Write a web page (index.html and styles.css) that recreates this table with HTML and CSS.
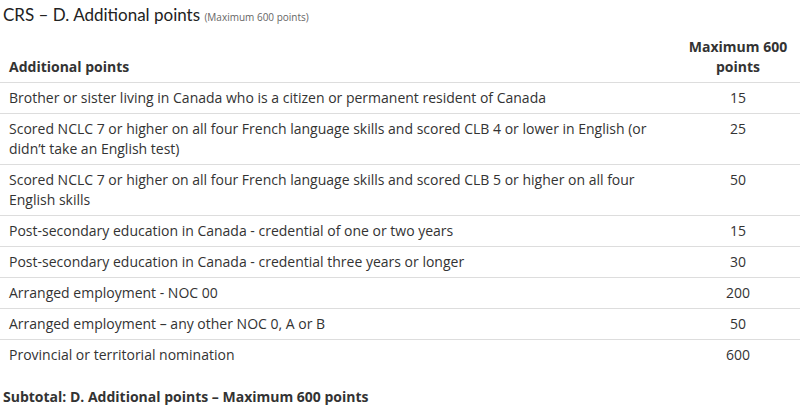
FILE: index.html
```html
<!DOCTYPE html>
<html>
<head>
<meta charset="utf-8">
<link rel="stylesheet" href="styles.css">
</head>
<body>
<h2 class="title">CRS – D. Additional points <small class="note">(Maximum 600 points)</small></h2>
<table class="pts">
  <thead>
    <tr><th class="lbl">Additional points</th><th class="num">Maximum 600 points</th></tr>
  </thead>
  <tbody>
    <tr><td>Brother or sister living in Canada who is a citizen or permanent resident of Canada</td><td class="num">15</td></tr>
    <tr><td>Scored NCLC 7 or higher on all four French language skills and scored CLB 4 or lower in English (or didn’t take an English test)</td><td class="num">25</td></tr>
    <tr><td>Scored NCLC 7 or higher on all four French language skills and scored CLB 5 or higher on all four English skills</td><td class="num">50</td></tr>
    <tr><td>Post-secondary education in Canada - credential of one or two years</td><td class="num">15</td></tr>
    <tr><td>Post-secondary education in Canada - credential three years or longer</td><td class="num">30</td></tr>
    <tr><td>Arranged employment - NOC 00</td><td class="num">200</td></tr>
    <tr><td>Arranged employment – any other NOC 0, A or B</td><td class="num">50</td></tr>
    <tr><td>Provincial or territorial nomination</td><td class="num">600</td></tr>
  </tbody>
</table>
<p class="subtotal">Subtotal: D. Additional points – Maximum 600 points</p>
</body>
</html>
```
FILE: styles.css
```css
html, body { margin: 0; padding: 0; background: #fff; }
body { font-family: "Open Sans", sans-serif; color: #333; font-size: 14px; }
.title { font-family: Lato, sans-serif; font-weight: 400; font-size: 17px; margin: 0; padding: 3px 3px 0; line-height: 24px; color: #222; }
.note { font-family: "Open Sans", sans-serif; font-size: 10px; color: #666; font-weight: 400; }
.pts { width: 800px; border-collapse: collapse; margin-top: 3px; }
.pts th, .pts td { padding: 5px 9px; line-height: 20px; text-align: left; vertical-align: top; }
.pts th { font-weight: 700; vertical-align: bottom; border-bottom: 1px solid #ddd; }
.pts tbody tr + tr td { border-top: 1px solid #ddd; }
.pts .num { text-align: center; width: 106px; }
.subtotal { font-weight: 700; margin: 17px 0 0; padding: 0 3px; line-height: 20px; }
```
